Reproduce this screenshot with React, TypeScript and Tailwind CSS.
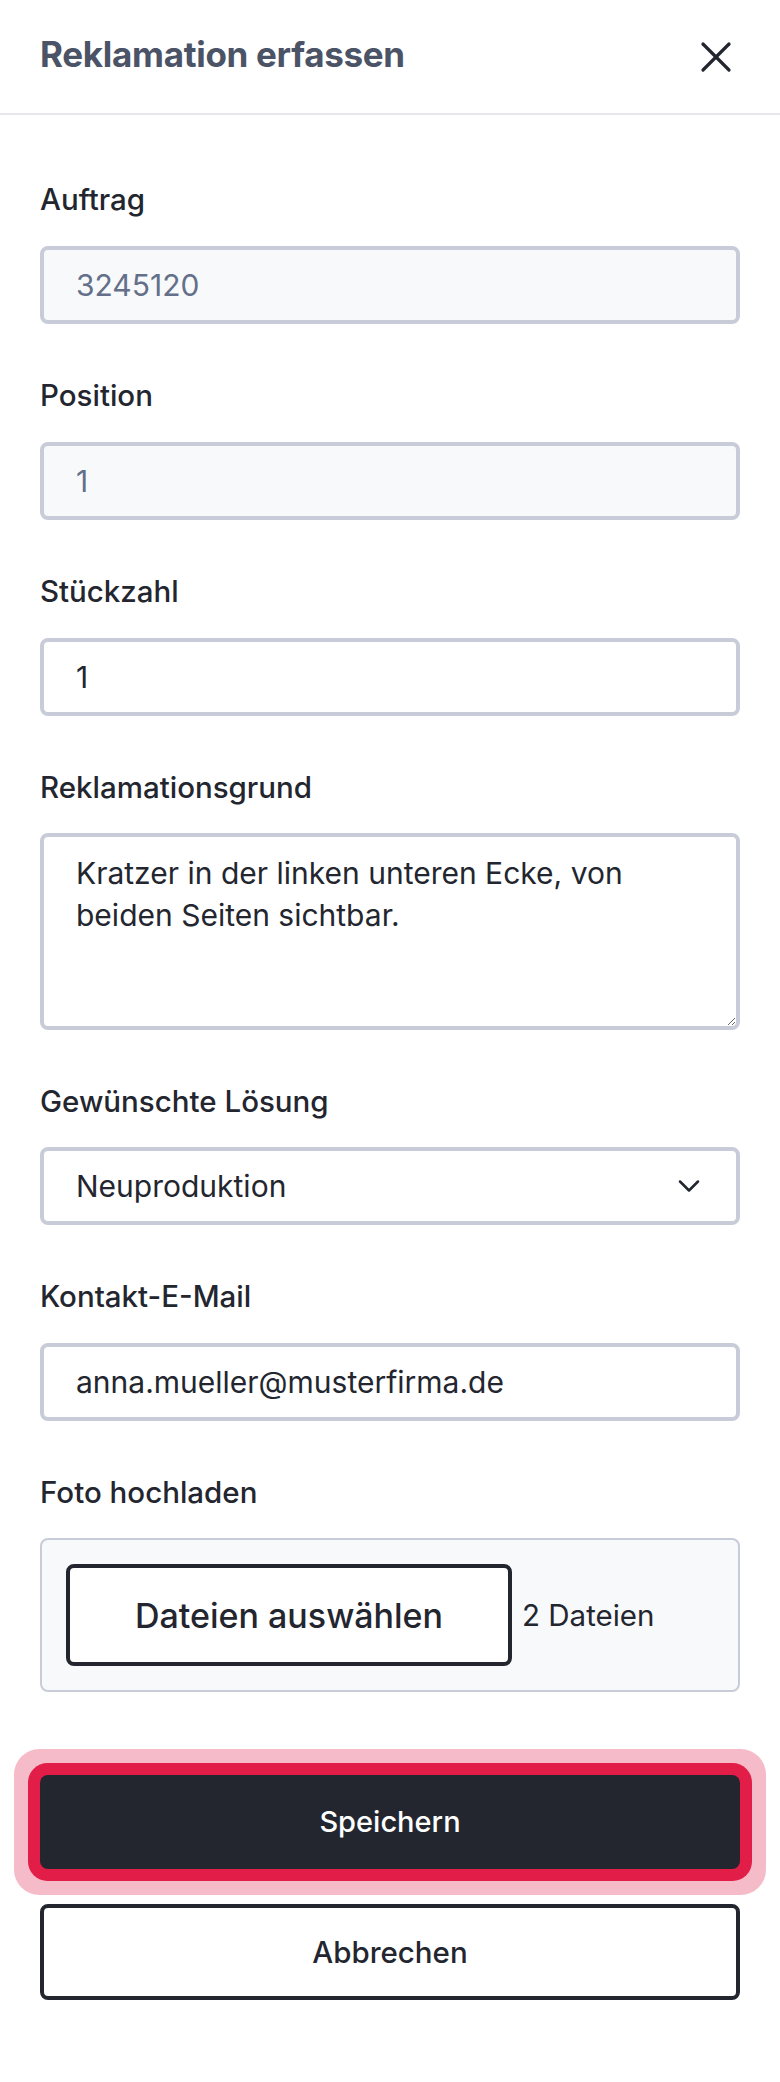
import React from 'react';
import { X, ChevronDown } from 'lucide-react';

const font = { fontFamily: 'Inter, "Noto Sans", sans-serif' };

function Label({ children }: { children: React.ReactNode }) {
  return <div className="h-[40px] leading-[40px] text-[29.5px] font-medium text-[#23262f]">{children}</div>;
}

function Field({ label, children, first }: { label: string; children: React.ReactNode; first?: boolean }) {
  return (
    <div className={first ? '' : 'mt-[51px]'}>
      <Label>{label}</Label>
      <div className="mt-[27px]">{children}</div>
    </div>
  );
}

const box = 'w-full h-[78px] rounded-[8px] border-[4px] border-[#c8ccd8] px-[32px] text-[30px] outline-none';

export default function App() {
  return (
    <div className="w-[780px] min-h-[2082px] bg-white text-[#23262f]" style={font}>
      <div className="h-[115px] px-[40px] flex items-center justify-between border-b-2 border-[#e6e7eb]">
        <h2 className="text-[35px] font-bold tracking-[-0.3px] text-[#4b5366] -mt-[4px]">Reklamation erfassen</h2>
        <button className="w-[52px] h-[52px] -mr-[2px] flex items-center justify-center text-[#23262f]">
          <X size={52} strokeWidth={1.5} />
        </button>
      </div>

      <div className="px-[40px] pt-[64px] pb-[81px]">
        <Field label="Auftrag" first>
          <input readOnly disabled defaultValue="3245120" className={box + ' bg-[#f8f9fa] text-[#64708a]'} />
        </Field>
        <Field label="Position">
          <input readOnly disabled defaultValue="1" className={box + ' bg-[#f8f9fa] text-[#64708a]'} />
        </Field>
        <Field label="Stückzahl">
          <input readOnly defaultValue="1" className={box + ' bg-white text-[#23262f]'} />
        </Field>
        <div className="mt-[51px]">
          <Label>Reklamationsgrund</Label>
          <textarea
            readOnly
            defaultValue={'Kratzer in der linken unteren Ecke, von\nbeiden Seiten sichtbar.'}
            className="mt-[26px] block w-full h-[197px] rounded-[8px] border-[4px] border-[#c8ccd8] px-[32px] pt-[15px] text-[30px] leading-[42px] text-[#23262f] outline-none resize-y"
          />
        </div>
        <div className="mt-[51px]">
          <Label>Gewünschte Lösung</Label>
          <div className="mt-[26px] h-[78px] rounded-[8px] border-[4px] border-[#c8ccd8] pl-[32px] pr-[29px] flex items-center justify-between text-[30px]">
            <span>Neuproduktion</span>
            <ChevronDown size={36} strokeWidth={1.7} />
          </div>
        </div>
        <Field label="Kontakt-E-Mail">
          <input readOnly defaultValue="anna.mueller@musterfirma.de" className={box + ' bg-white text-[#23262f]'} />
        </Field>
        <div className="mt-[51px]">
          <Label>Foto hochladen</Label>
          <div className="mt-[26px] h-[154px] rounded-[8px] border-2 border-[#c8ccd8] bg-[#f8f9fa] p-[24px] flex items-center">
            <button className="w-[446px] h-[102px] rounded-[8px] border-[4px] border-[#23262f] bg-white text-[34px] font-medium">
              Dateien auswählen
            </button>
            <span className="ml-[10px] text-[29.5px]">2 Dateien</span>
          </div>
        </div>

        <button className="mt-[83px] w-full h-[94px] rounded-[8px] bg-[#23262f] text-white text-[29px] font-medium shadow-[0_0_0_12px_#e11d48,0_0_0_26px_rgba(225,29,72,0.3)]">
          Speichern
        </button>
        <button className="mt-[35px] w-full h-[96px] rounded-[8px] border-[4px] border-[#23262f] bg-white text-[29.5px] font-medium">
          Abbrechen
        </button>
      </div>
    </div>
  );
}
